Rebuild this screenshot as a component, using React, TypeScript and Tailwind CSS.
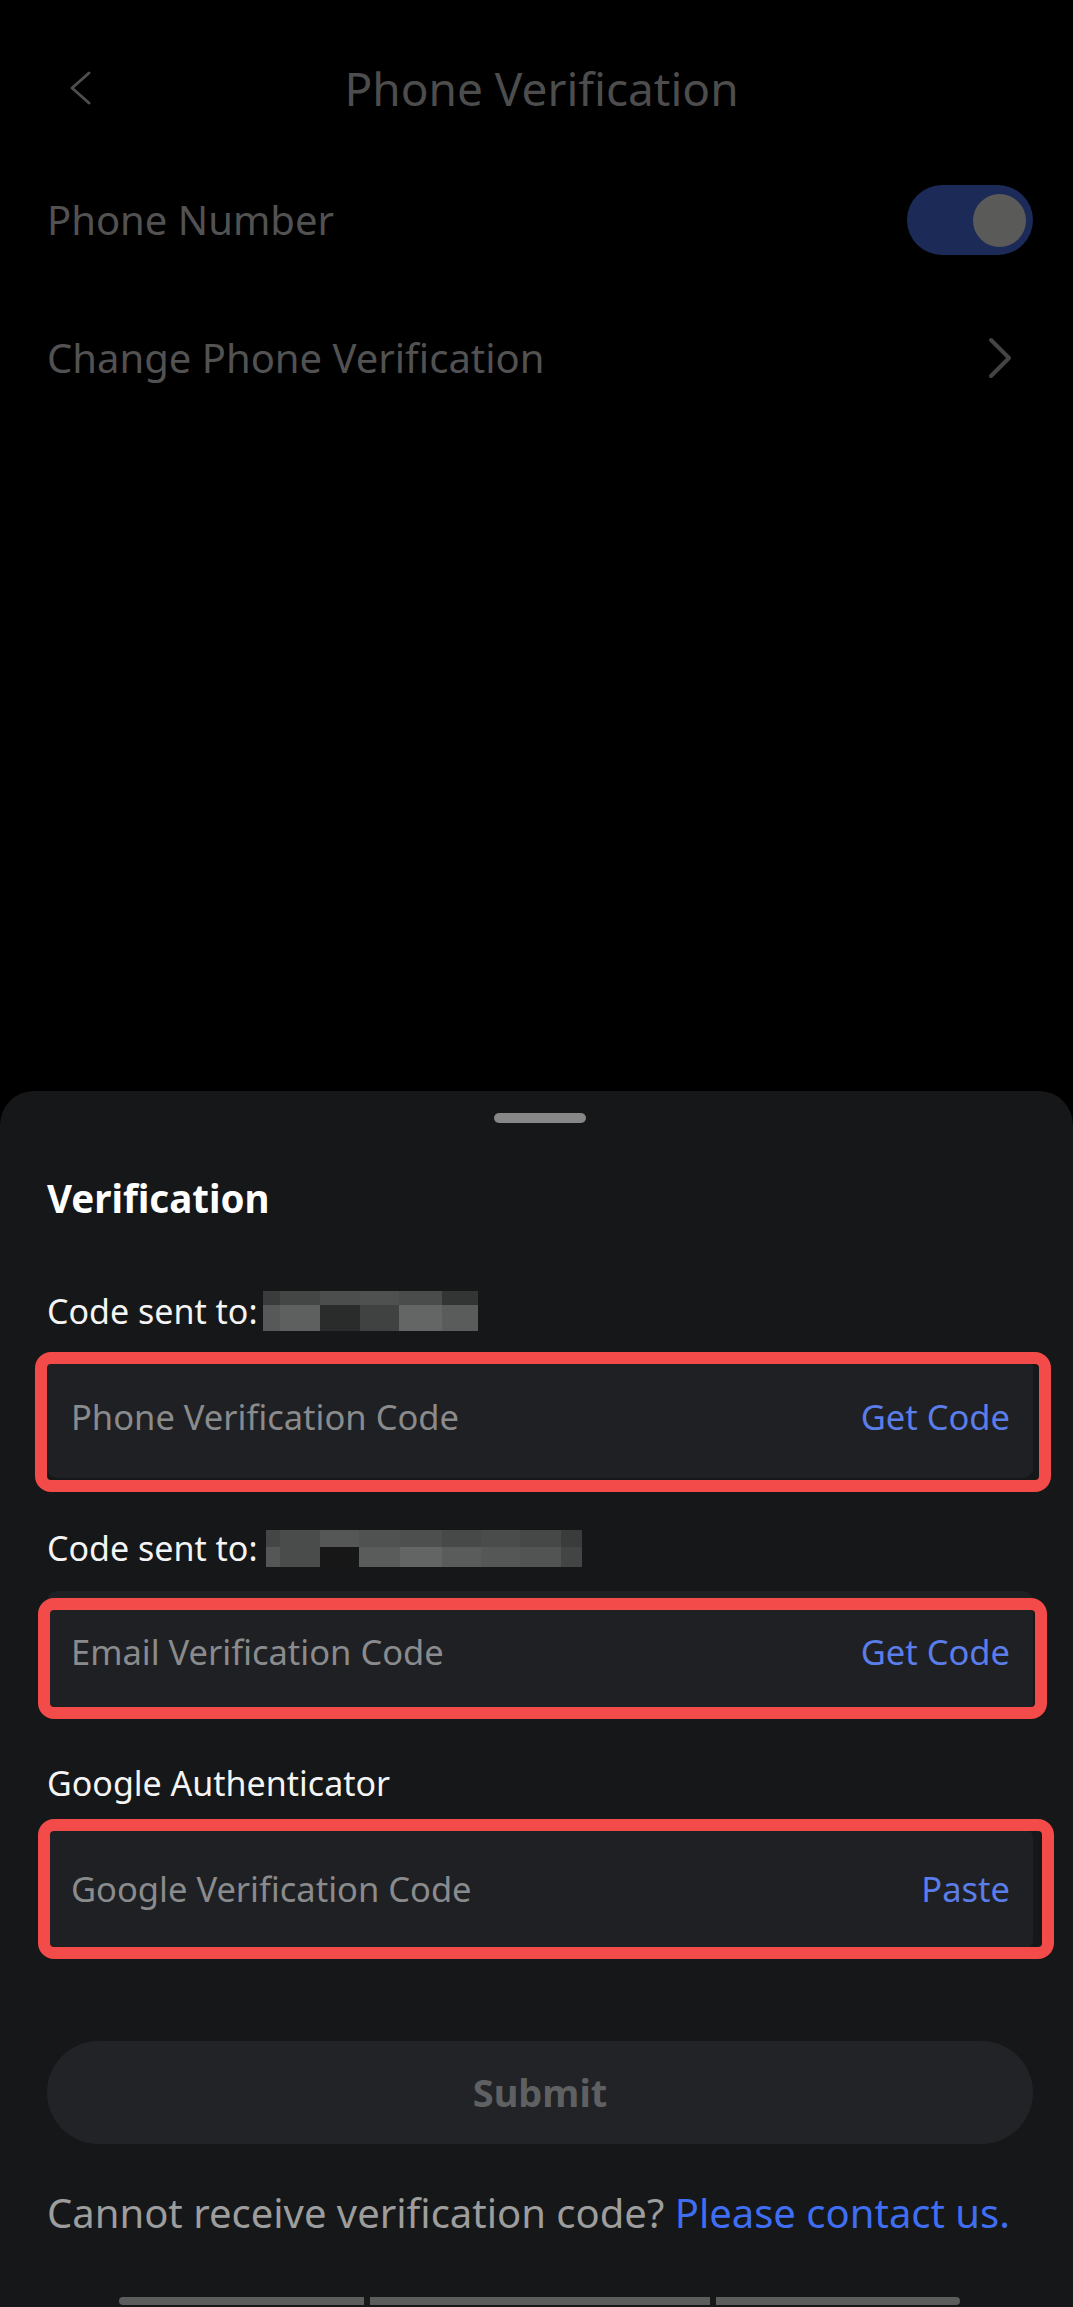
import React from "react";

// pixelated blocks that hide the phone number / email
const PHONE_CELLS_TOP = [
  "w-[17px] bg-[#3a3b3b]",
  "w-[40px] bg-[#444645]",
  "w-[40px] bg-[#4c4e4d]",
  "w-[39px] bg-[#4f5150]",
  "w-[43px] bg-[#4a4c4b]",
  "w-[36px] bg-[#333534]",
];
const PHONE_CELLS_BOTTOM = [
  "w-[17px] bg-[#575958]",
  "w-[40px] bg-[#5e605f]",
  "w-[40px] bg-[#2a2b2b]",
  "w-[39px] bg-[#404241]",
  "w-[43px] bg-[#646665]",
  "w-[36px] bg-[#5a5c5b]",
];
const EMAIL_CELLS_TOP = [
  "w-[14px] bg-[#444645]",
  "w-[40px] bg-[#4a4c4b]",
  "w-[39px] bg-[#555756]",
  "w-[41px] bg-[#505251]",
  "w-[42px] bg-[#4d4f4e]",
  "w-[39px] bg-[#474948]",
  "w-[39px] bg-[#4a4c4b]",
  "w-[41px] bg-[#464847]",
  "w-[21px] bg-[#3a3c3b]",
];
const EMAIL_CELLS_BOTTOM = [
  "w-[14px] bg-[#555756]",
  "w-[40px] bg-[#4a4c4b]",
  "w-[39px] bg-[#161716]",
  "w-[41px] bg-[#5a5c5b]",
  "w-[42px] bg-[#636564]",
  "w-[39px] bg-[#5a5c5b]",
  "w-[39px] bg-[#555756]",
  "w-[41px] bg-[#525453]",
  "w-[21px] bg-[#434544]",
];

function Mosaic({ top, bottom, topH, bottomH }: { top: string[]; bottom: string[]; topH: string; bottomH: string }) {
  return (
    <div className="flex flex-col">
      <div className={`flex ${topH}`}>
        {top.map((c, i) => (
          <div key={i} className={c} />
        ))}
      </div>
      <div className={`flex ${bottomH}`}>
        {bottom.map((c, i) => (
          <div key={i} className={c} />
        ))}
      </div>
    </div>
  );
}

function CodeField({ placeholder, action, marker }: { placeholder: string; action: string; marker: string }) {
  return (
    <div className="relative">
      <div className="flex h-[122px] items-center justify-between rounded-[10px] bg-[#1f2023] pl-[24px] pr-[23px]">
        <span className="text-[34.5px] text-[#8a8b8d]">{placeholder}</span>
        <span className="text-[34.5px] text-[#5a7de9]">{action}</span>
      </div>
      {/* red annotation frame drawn on top of the screenshot */}
      <div className={`pointer-events-none absolute rounded-[16px] border-[12px] border-[#f24b49] ${marker}`} />
    </div>
  );
}

export default function App() {
  return (
    <div className="flex min-h-[2307px] w-[1073px] flex-col bg-black font-['Noto_Sans',sans-serif]">
      {/* dimmed page behind the sheet */}
      <div className="h-[1091px]">
        <div className="grid h-[176px] grid-cols-[92px_1fr_82px] items-center">
          <div className="flex justify-end">
            <svg width="24" height="34" viewBox="0 0 24 34" fill="none">
              <polyline points="21,2 4,17 21,32" stroke="#4d4d4d" strokeWidth="3" strokeLinecap="round" strokeLinejoin="round" />
            </svg>
          </div>
          <div className="text-center text-[46px] text-[#4d4d4d]">Phone Verification</div>
          <div />
        </div>

        <div className="flex h-[88px] items-center justify-between pl-[47px] pr-[40px]">
          <span className="text-[40px] text-[#525252]">Phone Number</span>
          <div className="flex h-[70px] w-[126px] items-center justify-end rounded-full bg-[#1b2a56] pr-[7px]">
            <div className="h-[53px] w-[53px] rounded-full bg-[#5a5a59]" />
          </div>
        </div>

        <div className="mt-[50px] flex h-[88px] items-center justify-between pl-[47px] pr-[60px]">
          <span className="text-[40px] text-[#525252]">Change Phone Verification</span>
          <svg width="27" height="42" viewBox="0 0 27 42" fill="none">
            <polyline points="5,3 23,21 5,39" stroke="#444444" strokeWidth="4" strokeLinecap="round" strokeLinejoin="round" />
          </svg>
        </div>
      </div>

      {/* bottom sheet */}
      <div className="flex flex-1 flex-col rounded-t-[34px] bg-[#161718] pl-[47px] pr-[40px] pt-[22px]">
        <div className="mx-auto h-[10px] w-[92px] rounded-full bg-[#878787]" />

        <div className="mt-[51px] h-[48px] text-[38.5px] font-bold leading-[48px] text-white">Verification</div>

        <div className="mt-[65px] flex h-[48px] items-center">
          <span className="text-[34px] leading-[48px] text-[#f4f4f4]">Code sent to:</span>
          <div className="ml-[5px]">
            <Mosaic top={PHONE_CELLS_TOP} bottom={PHONE_CELLS_BOTTOM} topH="h-[14px]" bottomH="h-[26px]" />
          </div>
        </div>

        <div className="mt-[21px]">
          <CodeField
            placeholder="Phone Verification Code"
            action="Get Code"
            marker="-left-[12px] -right-[18px] -top-[4px] -bottom-[14px]"
          />
        </div>

        <div className="mt-[46px] flex h-[48px] items-center">
          <span className="text-[34px] leading-[48px] text-[#f4f4f4]">Code sent to:</span>
          <div className="ml-[8px]">
            <Mosaic top={EMAIL_CELLS_TOP} bottom={EMAIL_CELLS_BOTTOM} topH="h-[17px]" bottomH="h-[20px]" />
          </div>
        </div>

        <div className="mt-[19px]">
          <CodeField
            placeholder="Email Verification Code"
            action="Get Code"
            marker="-left-[9px] -right-[14px] top-[7px] -bottom-[6px]"
          />
        </div>

        <div className="mt-[46px] h-[48px] text-[34px] leading-[48px] text-[#f4f4f4]">Google Authenticator</div>

        <div className="mt-[21px]">
          <CodeField
            placeholder="Google Verification Code"
            action="Paste"
            marker="-left-[9px] -right-[21px] -top-[9px] -bottom-[9px]"
          />
        </div>

        <button
          type="button"
          className="mt-[91px] h-[103px] w-full rounded-full bg-[#222326] text-[38px] font-bold text-[#5f6062]"
        >
          Submit
        </button>

        <div className="mt-[43px] h-[52px] whitespace-nowrap text-[40px] leading-[52px] text-[#9d9d9d]">
          Cannot receive verification code? <span className="text-[#3f6ef2]">Please contact us.</span>
        </div>

        <div className="-ml-[47px] -mr-[40px] mt-[58px] flex gap-[6px] pl-[119px]">
          <div className="h-[8px] w-[245px] rounded-l-full bg-[#5b5c5c]" />
          <div className="h-[8px] w-[340px] bg-[#5b5c5c]" />
          <div className="h-[8px] w-[244px] rounded-r-full bg-[#5b5c5c]" />
        </div>
      </div>
    </div>
  );
}
